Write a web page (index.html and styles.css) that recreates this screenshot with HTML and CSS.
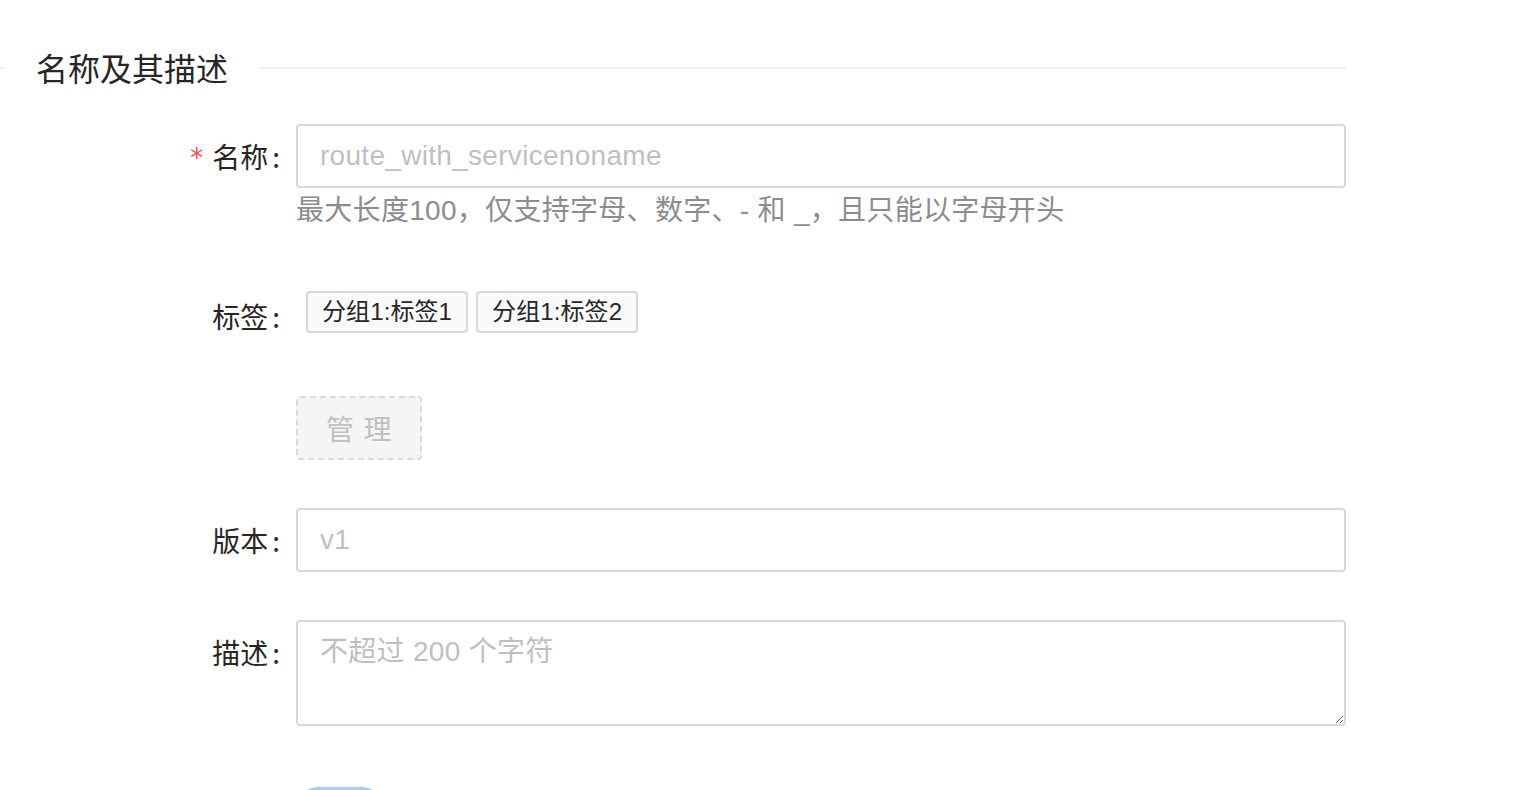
FILE: index.html
```html
<!DOCTYPE html>
<html lang="zh-CN">
<head>
    <meta charset="UTF-8">
    <meta name="viewport" content="width=device-width, initial-scale=1.0">
    <title>名称及其描述</title>
    <link rel="stylesheet" href="styles.css">
</head>
<body>
    <div class="page">
        <div class="divider"><span class="divider-text">名称及其描述</span></div>

        <form class="form">
            <div class="form-item has-explain">
                <div class="form-label"><label class="required">名称</label></div>
                <div class="form-control">
                    <input class="input" type="text" placeholder="route_with_servicenoname">
                    <div class="form-explain">最大长度100，仅支持字母、数字、- 和 _，且只能以字母开头</div>
                </div>
            </div>

            <div class="form-item">
                <div class="form-label"><label>标签</label></div>
                <div class="form-control">
                    <div class="tags">
                        <span class="tag">分组1:标签1</span>
                        <span class="tag">分组1:标签2</span>
                    </div>
                </div>
            </div>

            <div class="form-item">
                <div class="form-label"></div>
                <div class="form-control">
                    <button class="btn-dashed" type="button" disabled><span>管理</span></button>
                </div>
            </div>

            <div class="form-item">
                <div class="form-label"><label>版本</label></div>
                <div class="form-control">
                    <input class="input" type="text" placeholder="v1">
                </div>
            </div>

            <div class="form-item">
                <div class="form-label"><label>描述</label></div>
                <div class="form-control">
                    <textarea class="textarea" placeholder="不超过 200 个字符"></textarea>
                </div>
            </div>

            <div class="form-item">
                <div class="form-label"></div>
                <div class="form-control">
                    <span class="switch"></span>
                </div>
            </div>
        </form>
    </div>
</body>
</html>
```

FILE: styles.css
```css
html, body {
    margin: 0;
    padding: 0;
    overflow: hidden;
    background-color: #fff;
}
body {
    font-family: "Liberation Sans", "Noto Sans CJK SC", sans-serif;
    font-size: 28px;
    color: #262626;
}
.page {
    width: 1346px;
    padding-top: 10px;
}
.divider {
    display: flex;
    align-items: center;
    margin: 32px 0;
    height: 50px;
    font-size: 32px;
    font-weight: 400;
    font-family: "Noto Sans CJK SC", sans-serif;
    color: #262626;
}
.divider::before,
.divider::after {
    content: "";
    border-top: 2px solid #f0f0f0;
    transform: translateY(1px);
}
.divider::before {
    width: 4px;
}
.divider::after {
    flex: 1;
}
.divider-text {
    padding: 0 32px;
}
.form-item {
    display: flex;
    margin-bottom: 48px;
}
.form-label {
    width: 296px;
    flex-shrink: 0;
    height: 64px;
    display: flex;
    align-items: center;
    justify-content: flex-end;
    font-family: "Noto Sans CJK SC", sans-serif;
}
.form-label label::after {
    content: ":";
    margin: 0 16px 0 4px;
}
.form-label .required::before {
    content: "*";
    color: #ff4d4f;
    font-family: "DejaVu Sans", sans-serif;
    font-size: 26px;
    margin-right: 9px;
    position: relative;
    top: -1px;
}
.form-control {
    flex: 1;
}
.input,
.textarea {
    display: block;
    box-sizing: border-box;
    width: 100%;
    border: 2px solid #d9d9d9;
    border-radius: 4px;
    font-family: inherit;
    font-size: 28px;
    letter-spacing: 0.3px;
    color: #262626;
    outline: none;
    margin: 0;
}
.input {
    height: 64px;
    padding: 8px 22px;
}
.textarea {
    height: 106px;
    padding: 8px 22px;
    line-height: 44px;
    resize: vertical;
}
.input::placeholder,
.textarea::placeholder {
    color: #bfbfbf;
}
.form-explain {
    height: 48px;
    line-height: 46px;
    color: #8c8c8c;
    letter-spacing: 0.3px;
}
.tags {
    height: 64px;
    display: flex;
    align-items: flex-start;
    padding: 7px 0 0 10px;
    box-sizing: border-box;
    gap: 8px;
}
.tag {
    display: inline-block;
    height: 42px;
    line-height: 38px;
    box-sizing: border-box;
    padding: 0 14px;
    font-size: 24px;
    letter-spacing: 0.1px;
    background-color: #fafafa;
    border: 2px solid #d9d9d9;
    border-radius: 4px;
    color: #262626;
}
.btn-dashed {
    height: 64px;
    padding: 0 28px;
    white-space: nowrap;
    font-family: "Noto Sans CJK SC", sans-serif;
    font-size: 28px;
    color: #bfbfbf;
    background-color: #f5f5f5;
    border: 2px dashed #d9d9d9;
    border-radius: 4px;
}
.btn-dashed span {
    letter-spacing: 0.34em;
    margin-right: -0.34em;
}
.switch {
    display: block;
    width: 88px;
    height: 44px;
    margin-top: 13px;
    border-radius: 22px;
    background-color: #a3cbfc;
}
```
